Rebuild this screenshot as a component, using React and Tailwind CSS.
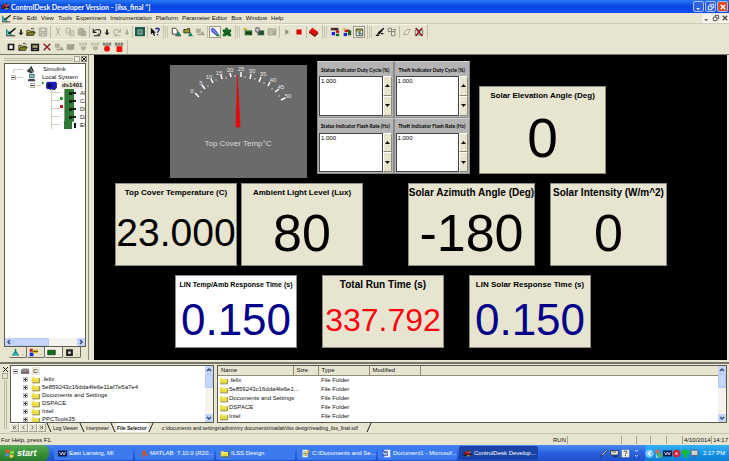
import clsx from "clsx";

// 12x12 pixel drawings used by the toolbars, the trees and the taskbar
const ICONS = {
  app: (
    <>
      <path d="M1 9V5h2V3h2v3h2V2h2v4h2v3z" fill="#111" />
      <path d="M2 8l3-5 2 4 3-4" stroke="#e22" strokeWidth="1.4" fill="none" />
      <path d="M5 9h5M7 4h3" stroke="#fc3" />
    </>
  ),
  layout: (
    <>
      <path d="M0 2l8 8H0z" fill="#0a8a8a" />
      <path d="M3 7l8-6 1 1-7 6-2 1z" fill="#111" />
      <path d="M0 10.5h11" stroke="#111" />
      <path d="M1.5 5v4h4" stroke="#8fe0d8" fill="none" />
    </>
  ),
  drop: <path d="M3 7h6L6 10zM5 3h2v4H5z" fill="#222" />,
  dropGray: <path d="M3 7h6L6 10zM5 3h2v4H5z" fill="#aaa895" />,
  open: (
    <>
      <path d="M1 10V4h3l1 1h4v2" fill="#e8d840" stroke="#333" />
      <path d="M1 10l2-4h8l-2 4z" fill="#8a8a18" stroke="#222" />
      <path d="M6 2c2-1 3 0 4 1" stroke="#222" fill="none" />
    </>
  ),
  save: (
    <>
      <path d="M1.5 1.5h9v9h-9z" fill="#c9c6b5" stroke="#a5a290" />
      <path d="M3.5 1.5h5v4h-5zM4 8h4v3H4z" fill="#e9e7d8" stroke="#a5a290" />
    </>
  ),
  cut: <path d="M4 1l3 7M8 1L5 8M3 9.5h2M7 9.5h2" stroke="#b5b2a0" strokeWidth="1.3" fill="none" />,
  copy: <path d="M1.5 1.5h5v6h-5zM5.5 4.5h5v6h-5zM7 7h2M7 9h2" stroke="#b0ad9b" fill="#e2dfcd" />,
  paste: <path d="M1.5 2.5h7v7h-7zM5.5 5.5h5v5h-5zM3 1.5h4" stroke="#a09d8b" fill="#b7b4a2" />,
  undo: <path d="M1.5 2v4.500h4M2 6c2-4 8.500-4 8.500 0 0 2-2 3-4 3M2 10.500h8" stroke="#222" strokeWidth="1.3" fill="none" />,
  redo: <path d="M10 2v4H6M10 6C8 2 2 2 2 6c0 2 2 3 4 3M2 10.5h8" stroke="#b0ad9b" strokeWidth="1.3" fill="none" />,
  book: (
    <>
      <path d="M0 0h12v11H0z" fill="#1d5a50" />
      <path d="M3 3h6v6H3z" fill="#9bc0b0" />
      <path d="M4 5h4M4 7h4" stroke="#123c36" />
    </>
  ),
  help: (
    <>
      <path d="M1 1v8l2-2 2 4 1-1-1-3h2z" fill="#111" />
      <path d="M7 3c0-2 4-2 4 0 0 1-2 2-2 4M9 8.5v1.5" stroke="#1a1a8a" strokeWidth="1.6" fill="none" />
    </>
  ),
  doc: (
    <>
      <path d="M1.5 1.5h4l2 2v5h-6z" fill="#fff" stroke="#222" />
      <path d="M6 10l3-5 3 5z" fill="#0b8a5a" />
      <path d="M5 10.5h7" stroke="#123" />
    </>
  ),
  docOpen: (
    <>
      <path d="M1 7V3h3l1-1h3v5z" fill="#9a9a20" stroke="#222" />
      <path d="M6 11l3-5 3 5z" fill="#0b8a5a" />
    </>
  ),
  docGray: (
    <>
      <path d="M1 2h6v5H1z" fill="#b0ad9b" />
      <path d="M6 10l3-5 3 5zM3 8h4v2H3z" fill="#a09d8b" />
    </>
  ),
  link: (
    <>
      <path d="M1 2l3-1 4 4 2 4-3 1-5-4z" fill="#4a52d8" />
      <path d="M3 3l5 5" stroke="#c8ccff" />
      <path d="M7 11l2-4 3 4z" fill="#0b8a5a" />
    </>
  ),
  puzzle: (
    <>
      <path d="M1 3h3V1h3v2h4v3h-1v2h1v3H7v-1H5v1H1V8h1V6H1z" fill="#176a24" />
      <path d="M3 5h2M7 7h2M4 8h2" stroke="#0a3012" />
    </>
  ),
  board: (
    <>
      <path d="M2 4h9v6H2z" fill="#2c6a2c" />
      <path d="M4 6h3v2H4zM8 6h2v3H8z" fill="#0f2f0f" />
      <path d="M1 1l3 3M4 1L1 4M0 2.5h5" stroke="#c8a820" />
    </>
  ),
  boardDown: (
    <>
      <path d="M3 4h8v6H3z" fill="#3c6a4c" />
      <path d="M1 1h4v5H1z" fill="#d9d9d9" stroke="#444" />
      <path d="M6 6h4M6 8h4" stroke="#122" />
    </>
  ),
  boardGray: <path d="M1.5 2.5h9v7h-9zM3 5h2M3 7h2M7 5h2v3H7z" stroke="#8f8c7a" fill="#d5d2c0" />,
  play: <path d="M4 2.5L8.5 6 4 9.5z" fill="#8e8b79" />,
  run: <path d="M3 1l7 5-7 5z" fill="#109a10" />,
  stop: <path d="M3 3h6v6H3z" fill="#d40000" />,
  gem: (
    <>
      <path d="M0 5l4-4 7 5-4 5z" fill="#e01010" />
      <path d="M0 5v2l7 5 4-4V6l-4 4z" fill="#7a0808" />
    </>
  ),
  inst: (
    <>
      <path d="M1 1h9v3H1z" fill="#2c2c2c" />
      <path d="M2 6h4v4H2z" fill="#1c2ad0" />
      <path d="M7 4h4v3H7z" fill="#b01818" />
      <path d="M7 8h4v3H7z" fill="#1a6a2a" />
      <path d="M2 2.5h3" stroke="#e22" />
    </>
  ),
  instTab: (
    <>
      <path d="M1 1h4v4H1z" fill="#c01818" />
      <path d="M1 6h5v5H1z" fill="#1c2ad0" />
      <path d="M5 2h7v5H5z" fill="#e0c020" />
      <path d="M5 4.5h7" stroke="#222" />
    </>
  ),
  instNew: (
    <>
      <path d="M3 3h6v3H3z" fill="#c01818" />
      <path d="M2 7h4v4H2z" fill="#1c2ad0" />
      <path d="M7 4h4v6H7z" fill="#2b5a2b" />
      <path d="M1 1l3 3M4 1L1 4" stroke="#d8b010" />
    </>
  ),
  instEdit: (
    <>
      <path d="M2 2h8v3H2z" fill="#a8a830" />
      <path d="M2.5 2.5h8v8h-8z" fill="none" stroke="#333" />
      <path d="M4 6h4M5 8h5M7 5v5" stroke="#245a4a" />
    </>
  ),
  pen: (
    <>
      <path d="M2 10l2-4 6-5 1 1-5 6z" fill="#111" />
      <path d="M7 8h3M1 10h4" stroke="#111" strokeWidth="1.5" />
    </>
  ),
  props: <path d="M1.5 1.5h4v4h-4zM5.5 5.5h4v5h-4zM7 3h3v2" stroke="#6e6c60" fill="#e9e9e0" />,
  eraser: <path d="M2 9l4-6h4L6.5 9z" fill="#f0efe6" stroke="#9b9887" />,
  paletteX: (
    <>
      <path d="M1.5 3.5h9v6h-9z" fill="#d8d5c4" stroke="#666" />
      <path d="M2 1l8 10M10 1L2 11" stroke="#8a1020" strokeWidth="1.7" />
    </>
  ),
  square: <path d="M3 3h6v6H3z" fill="#fff" stroke="#151515" strokeWidth="2" />,
  saveDark: (
    <>
      <path d="M1 2h10v9H1z" fill="#222" />
      <path d="M3 4h6v3H3z" fill="#a8a878" />
      <path d="M4 9h4" stroke="#888" />
    </>
  ),
  cross: <path d="M2 2l8 8M10 2l-8 8" stroke="#8a1422" strokeWidth="1.6" />,
  flag: <path d="M1 2l4 1 5-1v7l-5 1-4-1z" fill="#a5a290" />,
  mapGray: <path d="M1 1.5h3M5 1.5h2M8 1.5h3M1 3.5h10M4 6h5v2L6.5 10 4 8z" stroke="#aaa794" fill="#b5b2a0" />,
  mapDot: (
    <>
      <path d="M1 1.5h3M5 1.5h2M8 1.5h3M1 3.5h10" stroke="#333" />
      <circle cx="6" cy="8" r="3.5" fill="#f01010" />
    </>
  ),
  mapStop: (
    <>
      <path d="M1 1.5h3M5 1.5h2M8 1.5h3M1 3.5h10" stroke="#333" />
      <path d="M3 5h7v7H3z" fill="#f01010" />
    </>
  ),
  simulink: (
    <>
      <path d="M1 8l3-3 3-4 4 8-4 2-3-1z" fill="#2b352f" />
      <path d="M6 4l1 4 3 1" stroke="#b8c4b8" fill="none" />
    </>
  ),
  computer: (
    <>
      <path d="M3 1h7v6H3z" fill="#44505a" />
      <path d="M4 2h5v4H4z" fill="#78c0b8" />
      <path d="M2 8h8l1 3H1z" fill="#3a4450" />
    </>
  ),
  chip: (
    <>
      <path d="M1 2h10v8H1z" fill="#1c1cb8" />
      <path d="M2 4h4v4H2z" fill="#080850" />
      <path d="M.5 3v6M11.500 3v6M4 10.500h6" stroke="#223" />
    </>
  ),
  card: (
    <>
      <path d="M1 2h9v8H1z" fill="#2e7a34" />
      <path d="M5 5h7v2H8v1H5z" fill="#122012" />
      <path d="M.5 2v8.5H10" stroke="#8aa08a" fill="none" />
    </>
  ),
  cardPlain: (
    <>
      <path d="M0 2h8v8H0z" fill="#2e7a34" />
      <path d="M10 4h2v5h-2z" fill="#111" />
    </>
  ),
  folder: (
    <>
      <path d="M1 10V3h4l1 1h5v6z" fill="#e6dc3c" />
      <path d="M1.5 10.5h10V4" stroke="#6b6518" fill="none" />
      <path d="M2 5h8" stroke="#fff59a" />
    </>
  ),
  drive: (
    <>
      <path d="M1 5l2-2h7l1 2v4H1z" fill="#8b8b8b" />
      <path d="M1 8.5h10" stroke="#333" />
      <path d="M7 6.5h3" stroke="#d33" />
    </>
  ),
  flask: (
    <>
      <path d="M5 1h2v3l4 6H1l4-6z" fill="#0c8a8a" />
      <path d="M4 8h4" stroke="#7ff" />
    </>
  ),
  greenBox: <path d="M1 3h10v6H1z" fill="#14701c" stroke="#0a3a10" />,
  ring: <path d="M3 3h6v6H3z" fill="#fff" stroke="#222" strokeWidth="3" />,
  weather: (
    <>
      <path d="M0 2h12v8H0z" fill="#0c1a50" />
      <path d="M2 4l2 4 2-4 2 4 2-4" stroke="#fff" fill="none" />
    </>
  ),
  matlab: (
    <>
      <path d="M0 7l4-2 3-4 5 9-4-2-3 3z" fill="#e0501c" />
      <path d="M0 7l4-2 2 3-2 2z" fill="#3a78d0" />
    </>
  ),
  notepad: (
    <>
      <path d="M2 1h7v10H2z" fill="#f4f4e0" />
      <path d="M3 4h4M3 6h4M3 8h4" stroke="#6a8a3a" />
      <path d="M6 9l5-7" stroke="#e0a020" strokeWidth="2" />
    </>
  ),
  word: (
    <>
      <path d="M3 1h8v10H3z" fill="#f4f6ff" />
      <path d="M1 3h7v6H1z" fill="#2a50b0" />
      <path d="M2 4l1 4 1.5-3L6 8l1-4" stroke="#fff" fill="none" />
    </>
  ),
  brush: <path d="M2 10l2-3 6-6 1 1-5 6z" fill="#dfe6f0" stroke="#223" />,
  screen: (
    <>
      <path d="M1 2h10v6H1z" fill="#e8e8d8" stroke="#223" />
      <path d="M4 10h6M6 8v2M3 4h5" stroke="#223" />
    </>
  ),
  question: (
    <>
      <path d="M1 1h10v10H1z" fill="#f0ecc8" />
      <path d="M4 4c0-2 4-2 4 0 0 1-2 1-2 3M6 8v1.5" stroke="#223a90" strokeWidth="1.3" fill="none" />
    </>
  ),
  more: <path d="M4 2.5h4M4 8l2 2 2-2" stroke="#fff" fill="none" />,
  chevron: (
    <>
      <circle cx="6" cy="6" r="5.5" fill="#7cc8ff" />
      <path d="M7.5 3L4.5 6l3 3" stroke="#fff" strokeWidth="1.6" fill="none" />
    </>
  ),
  net: (
    <>
      <path d="M2 1h5v5H2z" fill="#e06a40" />
      <path d="M5 5h6v6H5z" fill="#50b060" />
      <path d="M3 7v4h3" stroke="#fff" fill="none" />
    </>
  ),
  shield: (
    <>
      <circle cx="6" cy="6" r="5" fill="#d82030" />
      <circle cx="6" cy="6" r="2" fill="#f4a0a8" />
    </>
  ),
  tree: <path d="M6 0l6 3-1 4H8v5H4V7H1L0 3z" fill="#18b838" />,
  monitor: <path d="M1.500 1.500h9v7h-9zM3 10.500h6" stroke="#555" fill="#d4d4dc" />,
};

function Icon({ name, className = "size-3" }) {
  return (
    <svg viewBox="0 0 12 12" className={clsx("shrink-0", className)} aria-hidden="true">
      {ICONS[name]}
    </svg>
  );
}

const menus = [
  "File", "Edit", "View", "Tools", "Experiment", "Instrumentation",
  "Platform", "Parameter Editor", "Bus", "Window", "Help",
];

const mainBar = [
  ["layout", "drop", "open", "save", "|", "cut", "copy", "paste", "|", "undo", "drop", "redo", "dropGray", "|", "book", "|", "help"],
  ["doc", "docOpen", "docGray", "|", "*link", "puzzle"],
  ["board", "boardDown", "boardGray", "|", "play", "stop", "|", "gem"],
  ["inst", "instNew", "*instEdit"],
  ["pen", "props", "|", "eraser", "paletteX"],
];

const secondBar = [
  ["square", "open", "saveDark", "cross", "docGray", "flag", "mapGray", "mapGray", "mapDot", "mapStop"],
];

function Toolbar({ groups }) {
  return (
    <div className="flex h-[15px] items-stretch pl-1">
      {groups.map((group, g) => (
        <div key={g} className="flex items-center border-t border-r border-[#c2bfac] border-t-[#f6f4e8] pr-[2px] pl-px">
          {g > 0 && <span className="mr-[2px] h-3 w-[3px] border-x border-[#c8c5b2]" />}
          {group.map((item, i) => {
            if (item === "|") return <span key={i} className="mx-px h-3 w-px bg-[#bfbcaa]" />;
            const pressed = item.startsWith("*");
            const name = pressed ? item.slice(1) : item;
            return (
              <button
                key={i}
                type="button"
                aria-label={name}
                className={clsx(
                  "flex h-3 items-center justify-center",
                  name.startsWith("drop") ? "w-2" : "w-3",
                  pressed && "border border-[#9d9a88] bg-[#f6f4ea]",
                )}>
                <Icon name={name} className="size-[10px]" />
              </button>
            );
          })}
        </div>
      ))}
    </div>
  );
}

function WindowButtons({ child }) {
  return ["Minimize", "Restore", "Close"].map((label, i) => (
    <button
      key={label}
      type="button"
      aria-label={label}
      className={clsx(
        "flex items-center justify-center",
        child
          ? "h-[9px] w-[9px] bg-[#f6f4ec] text-[#444]"
          : "h-[11px] w-[11px] rounded-xs border border-[#a9c0f6] text-white",
        !child && (label === "Close" ? "bg-[#dd4a26]" : "bg-[#2f62e4]"),
      )}>
      <svg viewBox="0 0 9 9" className="size-[8px]" fill="none" stroke="currentColor">
        {i === 0 && <path d="M2 6.5h3" strokeWidth="1.5" />}
        {i === 1 && <path d="M3.5 3V1.5h4v4H6M1.5 3.5h4v4h-4z" />}
        {i === 2 && <path d="M2 2l5 5M7 2L2 7" strokeWidth="1.5" />}
      </svg>
    </button>
  ));
}

function ScrollButton({ dir }) {
  const d = {
    up: "M2 5l2-2 2 2",
    down: "M2 3l2 2 2-2",
    left: "M5 2L3 4l2 2",
    right: "M3 2l2 2-2 2",
  }[dir];
  return (
    <button type="button" aria-label={`Scroll ${dir}`} className="size-2 shrink-0 rounded-[1px] bg-[#c3d3fb]">
      <svg viewBox="0 0 8 8" className="size-2">
        <path d={d} stroke="#35507c" strokeWidth="1.5" fill="none" />
      </svg>
    </button>
  );
}

function VScroll() {
  return (
    <div className="flex w-2 shrink-0 flex-col bg-[#f4f3ee]">
      <ScrollButton dir="up" />
      <div className="h-[14px] rounded-[1px] border border-[#b2c6f6] bg-[#c6d6fd]" />
      <div className="flex-1" />
      <ScrollButton dir="down" />
    </div>
  );
}

function Expander({ open }) {
  return (
    <span className="flex size-[5px] shrink-0 items-center justify-center border border-[#b8b5a8] bg-white">
      <svg viewBox="0 0 3 3" className="size-[3px]">
        <path d={open ? "M0 1.5h3" : "M0 1.5h3M1.5 0v3"} stroke="#333" />
      </svg>
    </span>
  );
}

const cards = [
  { name: "AI", icon: "card" },
  { name: "CAN", icon: "card", mark: "run" },
  { name: "DIO", icon: "card", mark: "halt" },
  { name: "DAC", icon: "card" },
  { name: "ECU", icon: "cardPlain" },
];

function PlatformPanel() {
  return (
    <aside className="flex w-[89px] shrink-0 flex-col border-r border-[#8f8c7a] pl-1">
      <div className="flex h-2 shrink-0 items-center gap-px pr-px">
        <span className="h-[3px] flex-1 border-y border-[#bcb9a6]" />
        <button type="button" aria-label="Float" className="size-[6px] border border-[#aaa794] bg-[#f3f1e6]" />
        <button type="button" aria-label="Close panel" className="flex size-[6px] items-center justify-center border border-[#8c8978]">
          <svg viewBox="0 0 4 4" className="size-1"><path d="M0 0l4 4M4 0L0 4" stroke="#111" /></svg>
        </button>
      </div>
      <div className="mr-[2px] flex min-h-0 flex-1 flex-col border border-[#5d5b50] bg-white">
        <ul className="min-h-0 flex-1 overflow-hidden pt-px">
          <li className="flex h-2 items-center pl-2">
            <span className="h-1 w-[10px] shrink-0 self-end border-t border-l border-[#d0cdbf]" />
            <Icon name="simulink" className="ml-[3px] size-[9px]" />
            <span className="ml-2">Simulink</span>
          </li>
          <li className="flex h-2 items-center pl-[6px]">
            <Expander open />
            <span className="h-px w-[7px] shrink-0 bg-[#d0cdbf]" />
            <Icon name="computer" className="ml-1 size-[9px]" />
            <span className="ml-[6px] whitespace-nowrap">Local System</span>
          </li>
          <li className="flex h-2 items-center pl-[25px]">
            <Expander open />
            <span className="h-px w-[6px] shrink-0 bg-[#d0cdbf]" />
            <Icon name="run" className="size-1 self-start" />
            <Icon name="chip" className="ml-px size-[11px]" />
            <b className="ml-1 bg-[#ece9d8] px-px">ds1401</b>
          </li>
          {cards.map((card) => (
            <li key={card.name} className="flex h-2 items-center pl-[46px]">
              <span className="h-2 w-[9px] shrink-0 border-l border-[#d0cdbf]">
                <span className="block h-1 border-b border-[#d0cdbf]" />
              </span>
              <span
                className={clsx(
                  "size-[3px] shrink-0 self-start",
                  card.mark === "run" && "rounded-r-full bg-[#109a10]",
                  card.mark === "halt" && "bg-[#c01020]",
                )}
              />
              <Icon name={card.icon} className="ml-px size-[12px]" />
              <span className="ml-1 min-w-0 flex-1 overflow-hidden">{card.name}</span>
            </li>
          ))}
        </ul>
        <div className="flex h-2 shrink-0 bg-[#f4f3ee]">
          <ScrollButton dir="left" />
          <div className="w-9 rounded-[1px] border border-[#b2c6f6] bg-[#c6d6fd]" />
          <div className="flex-1" />
          <ScrollButton dir="right" />
        </div>
      </div>
      <div className="flex h-[13px] shrink-0 items-start pl-[5px]">
        {["flask", "instTab", "greenBox", "ring"].map((name) => (
          <button
            key={name}
            type="button"
            aria-label={name}
            className={clsx(
              "flex h-[11px] w-[18px] items-center rounded-b-xs border-r border-b border-[#6f6d60] pl-[2px]",
              name === "greenBox" && "bg-[#f3f1e4]",
            )}>
            <Icon name={name} className="size-[9px]" />
            <span className="ml-[2px] self-end">.</span>
          </button>
        ))}
      </div>
    </aside>
  );
}

// gauge scale: label, label centre, tick from rim to centre
const ticks = [
  { label: "0", at: [22, 28], line: [25, 28, 29, 32] },
  { label: "5", at: [31, 20], line: [32, 20, 35, 24] },
  { label: "10", at: [39, 14], line: [41, 14, 43, 18] },
  { label: "15", at: [49, 10], line: [51, 10, 52, 14] },
  { label: "20", at: [60, 7], line: [60, 8, 61, 12] },
  { label: "25", at: [71, 6], line: [71, 7, 71, 12] },
  { label: "30", at: [82, 8], line: [81, 9, 80, 14] },
  { label: "35", at: [93, 11], line: [91, 12, 89, 17] },
  { label: "40", at: [103, 17], line: [100, 17, 98, 21] },
  { label: "45", at: [111, 24], line: [109, 24, 105, 27] },
  { label: "50", at: [118, 33], line: [115, 33, 111, 35] },
];
const minorTicks = [[31, 27], [38, 21], [46, 15], [56, 13], [65, 11], [75, 12], [85, 14], [94, 18], [102, 24], [109, 31]];

function Gauge() {
  return (
    <svg viewBox="0 0 137 113" className="mt-1 h-[113px] w-[137px] shrink-0 bg-[#6b6b6b]" role="img" aria-label="Top Cover Temp">
      {ticks.map(({ label, at, line }) => (
        <g key={label}>
          <line x1={line[0]} y1={line[1]} x2={line[2]} y2={line[3]} stroke="#fff" strokeWidth="1.5" />
          <text x={at[0]} y={at[1]} textAnchor="middle" fontSize="6" fill="#e4e4e4">{label}</text>
        </g>
      ))}
      {minorTicks.map(([x, y]) => (
        <circle key={x} cx={x} cy={y} r="0.7" fill="#e8e8e8" />
      ))}
      <path d="M67.5 10L66 62h4z" fill="#f00000" stroke="#f00000" strokeWidth="0.5" />
      <text x="68" y="81" textAnchor="middle" fontSize="8" fill="#dcdcdc">
        Top Cover Temp°C
      </text>
    </svg>
  );
}

function NumericInput({ id, label }) {
  return (
    <div className="flex min-w-0 flex-col border border-[#8a8a8a] border-t-[#d5d5d5] bg-[#b4b4b4] p-px">
      <label htmlFor={id} className="flex h-[13px] items-center justify-center font-[Lato,sans-serif] text-[5px] font-bold whitespace-nowrap">
        {label}
      </label>
      <div className="flex flex-1">
        <textarea
          id={id}
          defaultValue="1.000"
          className="w-0 flex-1 resize-none border border-[#444] bg-white px-px pt-px text-[6px] leading-[7px] outline-none"
        />
        <div className="flex w-[9px] flex-col">
          {["Increase", "Decrease"].map((name) => (
            <button
              key={name}
              type="button"
              aria-label={`${name} ${label}`}
              className="flex flex-1 items-center justify-center border border-[#8e8b79] border-t-white border-l-white bg-[#e7e4d0]">
              <svg viewBox="0 0 5 3" className="h-[3px] w-[5px]">
                <path d={name === "Increase" ? "M0 3h5L2.5 0z" : "M0 0h5L2.5 3z"} fill="#111" />
              </svg>
            </button>
          ))}
        </div>
      </div>
    </div>
  );
}

const inputs = [
  "Status Indicator Duty Cycle (%)",
  "Theft Indicator Duty Cycle (%)",
  "Status Indicator Flash Rate (Hz)",
  "Theft Indicator Flash Rate (Hz)",
];

function Display({ title, value, className, titleClass = "text-[8px]", valueClass }) {
  return (
    <div className={clsx("flex shrink-0 flex-col border border-[#8e8c80]", className)}>
      <div className={clsx("flex h-[18px] items-center justify-center font-bold whitespace-nowrap", titleClass)}>
        {title}
      </div>
      <div className={clsx("flex min-h-0 flex-1 items-center justify-center pb-[2px] leading-none", valueClass)}>
        {value}
      </div>
    </div>
  );
}

function Canvas() {
  return (
    <main className="min-w-0 flex-1 overflow-hidden bg-black pt-[6px] text-black">
      <div className="flex items-start pl-[76px]">
        <Gauge />
        <div className="ml-[10px] grid h-[113px] w-[153px] shrink-0 grid-cols-2 grid-rows-2">
          {inputs.map((label, i) => (
            <NumericInput key={label} id={`input-${i}`} label={label} />
          ))}
        </div>
        <Display
          title="Solar Elevation Angle (Deg)"
          value="0"
          className="mt-[25px] ml-[9px] h-[88px] w-[127px] bg-[#e7e4d0]"
          valueClass="text-[55px]"
        />
      </div>
      <div className="mt-[5px] flex pl-[21px]">
        <Display title="Top Cover Temperature (C)" value="23.000" className="h-[83px] w-[122px] bg-[#e7e4d0]" valueClass="text-[39px]" />
        <Display title="Ambient Light Level (Lux)" value="80" className="ml-1 h-[83px] w-[122px] bg-[#e7e4d0]" valueClass="text-[52px]" />
        <Display title="Solar Azimuth Angle (Deg)" value="-180" className="ml-[45px] h-[83px] w-[127px] bg-[#e7e4d0]" titleClass="text-[10px]" valueClass="text-[52px]" />
        <Display title="Solar Intensity (W/m^2)" value="0" className="ml-[15px] h-[83px] w-[117px] bg-[#e7e4d0]" titleClass="text-[10px]" valueClass="text-[52px]" />
      </div>
      <div className="mt-[9px] flex gap-[25px] pl-[81px]">
        <Display title="LIN Temp/Amb Response Time (s)" value="0.150" className="h-[73px] w-[122px] bg-white" titleClass="text-[7px]" valueClass="text-[44px] text-[#00008b]" />
        <Display title="Total Run Time (s)" value="337.792" className="h-[73px] w-[122px] bg-[#e7e4d0]" titleClass="text-[10px]" valueClass="text-[32px] text-[#ff0010]" />
        <Display title="LIN Solar Response Time (s)" value="0.150" className="h-[73px] w-[122px] bg-[#e7e4d0]" valueClass="text-[44px] text-[#00008b]" />
      </div>
    </main>
  );
}

const folders = [".felix", "5e859243c16dda4fe6e11af7e5a7e4", "Documents and Settings", "DSPACE", "Intel", "PPCTools35"];
const fileNames = [".felix", "5e859243c16dda4fe6e1...", "Documents and Settings", "DSPACE", "Intel", "PPCTools35"];

function TabEdge({ flip }) {
  return (
    <svg viewBox="0 0 6 9" className="h-[9px] w-[6px] shrink-0" fill="none" stroke="#222">
      <path d={flip ? "M5 0L1 9" : "M1 0l4 9"} />
    </svg>
  );
}

function FilePane() {
  return (
    <section className="flex h-[71px] shrink-0 border-t-2 border-[#77756a] pt-px">
      <div className="flex w-[10px] shrink-0 flex-col items-center gap-px pt-[2px]">
        <button type="button" aria-label="Close pane" className="size-[5px]">
          <svg viewBox="0 0 5 5" className="size-[5px]"><path d="M0 0l5 5M5 0L0 5" stroke="#222" /></svg>
        </button>
        <button type="button" aria-label="Dock" className="size-[6px] border border-[#aaa794]" />
        <span className="mb-1 w-[3px] flex-1 border-x border-[#bcb9a6]" />
      </div>
      <div className="flex min-w-0 flex-1 flex-col pr-[2px]">
        <div className="flex h-[58px] shrink-0 gap-[3px]">
          <div className="flex w-[204px] shrink-0 border border-[#5d5b50] bg-white">
            <ul className="min-w-0 flex-1 overflow-hidden pt-px">
              <li className="flex h-2 items-center pl-[2px]">
                <Expander open />
                <Icon name="drive" className="mx-[2px] size-[10px]" />
                <span className="bg-[#ece9d8] px-px">C:</span>
              </li>
              {folders.map((name) => (
                <li key={name} className="flex h-2 items-center pl-3">
                  <Expander />
                  <Icon name="folder" className="mr-[2px] ml-[3px] size-[9px]" />
                  <span>{name}</span>
                </li>
              ))}
            </ul>
            <VScroll />
          </div>
          <div className="flex min-w-0 flex-1 items-stretch border border-[#5d5b50] bg-white">
            <div className="min-w-0 flex-1 overflow-hidden">
              <table className="w-full table-fixed border-collapse text-left">
                <thead>
                  <tr className="h-[9px] bg-[#e7e4d0]">
                    <th className="w-[75px] border-r border-b border-[#8e8b79] p-0 pl-[3px] font-normal">Name</th>
                    <th className="w-[25px] border-r border-b border-[#8e8b79] p-0 pl-[3px] font-normal">Size</th>
                    <th className="w-[51px] border-r border-b border-[#8e8b79] p-0 pl-[3px] font-normal">Type</th>
                    <th className="w-[51px] border-r border-b border-[#8e8b79] p-0 pl-[3px] font-normal">Modified</th>
                    <th className="border-b border-[#8e8b79] p-0" />
                  </tr>
                </thead>
                <tbody>
                  {fileNames.map((name) => (
                    <tr key={name} className="h-[9px]">
                      <td className="p-0 pl-px">
                        <span className="flex h-[9px] items-center whitespace-nowrap">
                          <Icon name="folder" className="mr-px size-[9px]" />
                          {name}
                        </span>
                      </td>
                      <td className="p-0" />
                      <td className="p-0 pl-[3px]">File Folder</td>
                      <td className="p-0" />
                      <td className="p-0" />
                    </tr>
                  ))}
                </tbody>
              </table>
            </div>
            <VScroll />
          </div>
        </div>
        <div className="flex h-[9px] shrink-0 items-center text-[5px]">
          {["M3 2v4M6 2L4 4l2 2", "M5 2L3 4l2 2", "M3 2l2 2-2 2", "M5 2v4M2 2l2 2-2 2"].map((d, i) => (
            <button key={d} type="button" aria-label={`Tab scroll ${i + 1}`} className="flex h-[9px] w-[9px] items-center justify-center border border-[#a5a290] border-t-white border-l-white">
              <svg viewBox="0 0 8 8" className="size-[7px]"><path d={d} stroke="#555" fill="none" /></svg>
            </button>
          ))}
          <TabEdge />
          <button type="button" className="px-px">Log Viewer</button>
          <TabEdge />
          <button type="button" className="px-px">Interpreter</button>
          <TabEdge />
          <button type="button" className="h-[9px] bg-white px-px font-bold">File Selector</button>
          <TabEdge flip />
          <span className="mx-2 whitespace-nowrap">
            c:\documents and settings\admin\my documents\matlab\ilss design\reading_ilss_final.sdf
          </span>
          <TabEdge flip />
        </div>
      </div>
    </section>
  );
}

const tasks = [
  ["weather", "East Lansing, MI"],
  ["matlab", "MATLAB  7.10.0 (R20..."],
  ["folder", "ILSS Design"],
  ["notepad", "C:\\Documents and Se..."],
  ["word", "Document1 - Microsof..."],
  ["app", "ControlDesk Develop..."],
];

function Taskbar() {
  return (
    <footer className="flex h-4 shrink-0 items-stretch bg-linear-to-b from-[#4a8af0] via-[#2a60e0] to-[#1f4fc8] text-white">
      <button type="button" className="flex w-[49px] shrink-0 items-center rounded-r-md bg-linear-to-b from-[#57a857] via-[#379237] to-[#2b772b] pl-[5px]">
        <svg viewBox="0 0 12 12" className="size-[10px]">
          <path d="M1 2.5c1.5-1 3-1 4.5 0L5 6C3.5 5 2 5 .5 6z" fill="#f0522a" />
          <path d="M6.5 2.8c1.5 1 3 1 4.5 0L10.5 6.5c-1.5 1-3 1-4.5 0z" fill="#8cd63c" />
          <path d="M.3 7c1.5-1 3-1 4.5 0l-.5 3.5c-1.5-1-3-1-4.500 0z" fill="#4f8cf0" />
          <path d="M5.8 7.500c1.5 1 3 1 4.5 0L9.8 11c-1.5 1-3 1-4.5 0z" fill="#fbd030" />
        </svg>
        <span className="ml-[2px] text-[9px] font-bold italic">start</span>
      </button>
      <nav className="flex min-w-0 flex-1 gap-[2px] py-px pl-[5px]">
        {tasks.map(([icon, label], i) => (
          <button
            key={label}
            type="button"
            className={clsx(
              "flex w-[79px] shrink-0 items-center gap-[2px] rounded-xs pl-1 whitespace-pre",
              i === 5 ? "bg-[#1a43a8]" : "bg-[#3c7af0]",
            )}>
            <Icon name={icon} className="size-[9px]" />
            {label}
          </button>
        ))}
      </nav>
      <div className="flex shrink-0 items-center gap-[2px] pr-1">
        {["brush", "screen", "question", "more"].map((name) => (
          <Icon key={name} name={name} className="size-[9px]" />
        ))}
      </div>
      <div className="flex w-[84px] shrink-0 items-center bg-linear-to-b from-[#38b0f8] via-[#1594ea] to-[#0f7fd4]">
        {["chevron", "net", "weather", "shield", "tree", "monitor"].map((name) => (
          <Icon key={name} name={name} className="size-[9px]" />
        ))}
        <time className="ml-1 whitespace-nowrap">2:17 PM</time>
      </div>
    </footer>
  );
}

export default function App() {
  return (
    <div className="flex h-screen flex-col overflow-hidden bg-[#e7e4d0] font-['Liberation_Sans',sans-serif] text-[6px] leading-[8px] text-[#111]">
      {/* TITLE BAR */}
      <header className="flex h-[13px] shrink-0 items-center gap-px bg-linear-to-b from-[#2a78f4] via-[#0a44e0] to-[#0a50f0] px-px text-white">
        <Icon name="app" className="size-[9px]" />
        <h1 className="flex-1 font-[Lato,sans-serif] text-[7px] font-bold">
          ControlDesk Developer Version - [ilss_final *]
        </h1>
        <WindowButtons />
      </header>

      {/* MENU */}
      <nav className="flex h-[11px] shrink-0 items-center border-b border-[#d0cdbb] pl-[2px]">
        <Icon name="layout" className="size-[9px]" />
        <div className="flex flex-1">
          {menus.map((m) => (
            <button key={m} type="button" className="px-[2px] whitespace-nowrap">{m}</button>
          ))}
        </div>
        <WindowButtons child />
      </nav>

      <Toolbar groups={mainBar} />
      <Toolbar groups={secondBar} />

      <div className="flex min-h-0 flex-1 border-t border-[#77756a] pr-[2px] pb-[2px]">
        <PlatformPanel />
        <div className="w-[5px] shrink-0" />
        <Canvas />
      </div>

      <FilePane />

      {/* STATUS BAR */}
      <div className="flex h-[12px] shrink-0 items-center border-t border-[#c6c3b0]">
        <span className="flex-1 pl-px">For Help, press F1.</span>
        <span className="w-[15px] border-r border-[#a5a290]">RUN</span>
        <span className="h-2 w-[54px] border-r border-[#a5a290]" />
        <span className="h-2 w-[15px] border-r border-[#a5a290]" />
        <span className="h-2 w-[14px] border-r border-[#a5a290]" />
        <span className="h-2 w-[16px] border-r border-[#a5a290]" />
        <span className="h-2 w-[16px] border-r border-[#a5a290]" />
        <span className="w-[29px] border-r border-[#a5a290] pl-px">4/10/2014</span>
        <span className="w-[17px] pl-px">14:17</span>
      </div>

      <Taskbar />
    </div>
  );
}
